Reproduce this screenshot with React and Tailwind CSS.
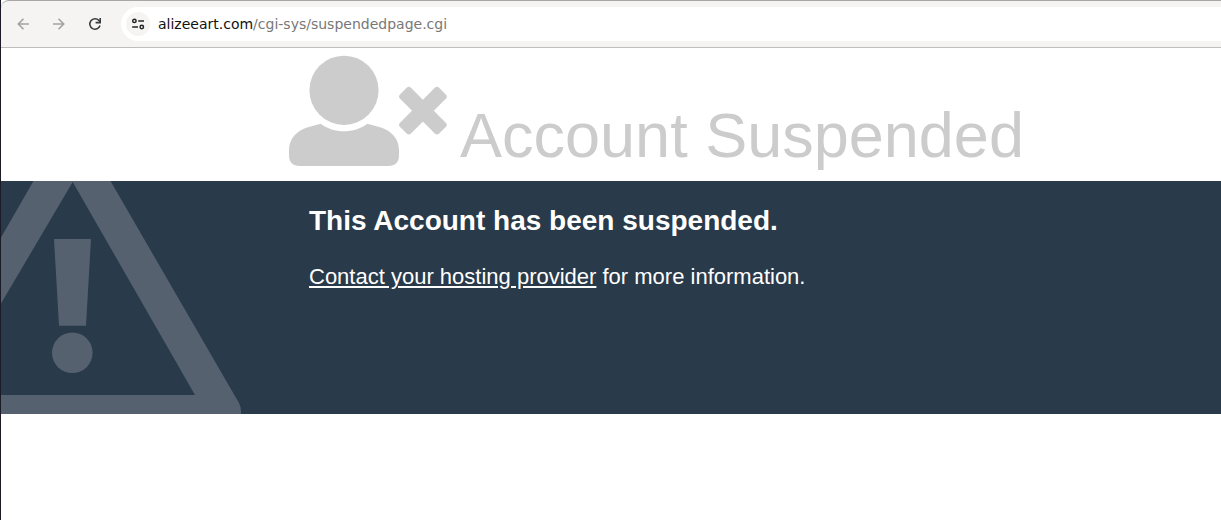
const ToolbarButton = ({ label, disabled, children }) => (
  <button
    type="button"
    aria-label={label}
    disabled={disabled}
    className="flex size-9 items-center justify-center rounded-full text-[#3a3d3f] disabled:text-[#a3a3a2]"
  >
    <svg
      viewBox="0 0 16 16"
      className="size-4"
      fill="none"
      stroke="currentColor"
      strokeWidth="1.6"
      aria-hidden="true"
    >
      {children}
    </svg>
  </button>
);

const BrowserBar = () => (
  <div className="flex h-12 items-center overflow-hidden rounded-tl-lg border-t border-b border-t-[#a9a6a4] border-b-[#bfbcba] bg-[#f5f4f3] pl-1">
    <ToolbarButton label="Back" disabled>
      <path d="M14 8H3.5M8.5 2.8 3.3 8l5.2 5.2" />
    </ToolbarButton>
    <ToolbarButton label="Forward" disabled>
      <path d="M2 8h10.5M7.500 2.800 12.700 8l-5.200 5.200" />
    </ToolbarButton>
    <ToolbarButton label="Reload">
      <path d="M13 9.500A5.200 5.200 0 1 1 11.900 4.500L13.200 6" />
      <path d="M13.200 2V6.600H8.600" />
    </ToolbarButton>

    <div className="ml-2 flex h-[34px] flex-1 items-center gap-2 rounded-l-full bg-white pl-[5px]">
      <button
        type="button"
        aria-label="View site information"
        className="flex size-6 shrink-0 items-center justify-center rounded-full bg-[#f5f4f3] text-[#242424]"
      >
        <svg
          viewBox="0 0 14 14"
          className="size-3.5"
          fill="none"
          stroke="currentColor"
          strokeWidth="1.5"
          aria-hidden="true"
        >
          <circle cx="3.4" cy="3.9" r="1.7" />
          <path d="M7.2 3.9H13M1.2 10H7" />
          <circle cx="10.8" cy="10" r="1.7" />
        </svg>
      </button>
      <a
        href="#suspended"
        className="font-['DejaVu_Sans',sans-serif] text-sm whitespace-nowrap text-[#787877]"
      >
        <span className="text-[#111111]">alizeeart.com</span>
        /cgi-sys/suspendedpage.cgi
      </a>
    </div>
  </div>
);

const UserTimesIcon = () => (
  <svg
    viewBox="0 0 160 112"
    className="h-28 w-40 shrink-0"
    fill="currentColor"
    aria-hidden="true"
  >
    <circle cx="56" cy="35.3" r="34.6" />
    <path d="M32.5 68.8C46 78.8 66 78.8 79.5 68.8L92 72.2C104 75.5 111 84.5 111 95V100Q111 111 100 111H12Q1 111 1 100V95C1 84.5 8 75.5 20 72.2Z" />
    <g transform="translate(134.9 55.7)">
      <rect x="-27.6" y="-7.7" width="55.2" height="15.4" rx="3" transform="rotate(45)" />
      <rect x="-27.6" y="-7.7" width="55.2" height="15.4" rx="3" transform="rotate(-45)" />
    </g>
  </svg>
);

const WarningIcon = () => (
  <svg
    viewBox="0 0 240 233"
    className="absolute top-0 left-0 h-[233px] w-60"
    fill="#55616f"
    aria-hidden="true"
  >
    <path d="M32.5 0H109.5L238 222Q240 226 240 230V233H0V214H194L71.7 1L0 122.5V56.5Z" />
    <path d="M53 58H90L85 144.7H58Z" />
    <circle cx="71.3" cy="171.8" r="20.3" />
  </svg>
);

export default function App() {
  return (
    <div className="min-h-screen border-l border-[#1b1b27] bg-white font-['Liberation_Sans',Arial,sans-serif]">
      <BrowserBar />

      <main id="suspended">
        <header className="mx-auto flex max-w-[646px] items-end gap-3 pt-[7px] pb-3.5 text-[#cccccc]">
          <UserTimesIcon />
          <h1 className="text-[63px] leading-[64px] whitespace-nowrap">
            Account Suspended
          </h1>
        </header>

        <section className="relative min-h-[233px] overflow-hidden bg-[#293a4a] text-white">
          <WarningIcon />
          <div className="relative mx-auto max-w-[644px] px-5 pt-6">
            <h2 className="text-[28px] leading-8 font-bold">
              This Account has been suspended.
            </h2>
            <p className="mt-6 text-[22px] leading-8">
              <a href="#contact" className="underline">
                Contact your hosting provider
              </a>{" "}
              for more information.
            </p>
          </div>
        </section>
      </main>
    </div>
  );
}
